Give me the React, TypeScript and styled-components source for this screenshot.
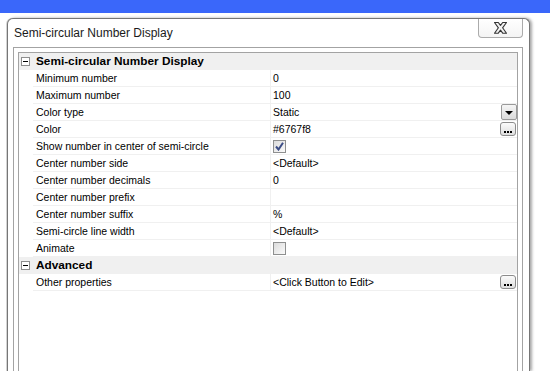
import React from 'react';
import styled, { createGlobalStyle } from 'styled-components';

const GlobalStyle = createGlobalStyle`
  html, body {
    margin: 0;
    padding: 0;
    background: #ffffff;
    font-family: "Liberation Sans", Arial, sans-serif;
    color: #000;
  }
`;

const Page = styled.div`
  width: 550px;
  height: 371px;
  overflow: hidden;
  display: flex;
  flex-direction: column;
  background: #fff;
`;

const TopBar = styled.div`
  height: 13px;
  flex-shrink: 0;
  background: #3a67fa;
`;

const Dialog = styled.div`
  margin: 5px 0 0 7px;
  width: 523px;
  box-sizing: border-box;
  flex: 1;
  display: flex;
  flex-direction: column;
  border: 1px solid #767676;
  border-bottom: none;
  border-radius: 6px 6px 0 0;
  background: #fff;
  box-shadow: 2px 0 3px rgba(0, 0, 0, 0.35), -1px 0 0 #d6d6d6;
`;

const TitleBar = styled.div`
  height: 28px;
  flex-shrink: 0;
  display: flex;
  align-items: flex-start;
`;

const Title = styled.div`
  padding: 7px 0 0 6px;
  font-size: 12px;
  line-height: 14px;
  color: #1a1a1a;
`;

const CloseButton = styled.div`
  margin-left: auto;
  margin-right: 6px;
  width: 45px;
  height: 19px;
  box-sizing: border-box;
  border: 1px solid #ababab;
  border-top: none;
  border-radius: 0 0 4px 4px;
  display: flex;
  align-items: center;
  justify-content: center;
  background: linear-gradient(#ffffff, #f4f4f4);
`;

const Panel = styled.div`
  flex: 1;
  margin: 0 6px 0 5px;
  padding: 4px 4px 0 4px;
  border: 1px solid #a3a3a3;
  border-bottom: none;
  display: flex;
  flex-direction: column;
`;

const Grid = styled.div`
  flex: 1;
  border: 1px solid #a3a3a3;
  border-bottom: none;
  background: #fff;
  font-size: 10.5px;
`;

const CategoryRow = styled.div`
  height: 16px;
  border-bottom: 1px solid #f0f0f0;
  background: #f0f0f0;
  display: flex;
  align-items: center;
`;

const Toggle = styled.div`
  width: 9px;
  height: 9px;
  box-sizing: border-box;
  margin: 0 6px 0 2px;
  border: 1px solid #8e8e8e;
  background: #fff;
  display: flex;
  align-items: center;
  justify-content: center;
  &::after {
    content: '';
    width: 5px;
    height: 1px;
    background: #000;
  }
`;

const CategoryName = styled.div`
  font-weight: bold;
  font-size: 11.8px;
  line-height: 16px;
`;

const Row = styled.div`
  display: grid;
  grid-template-columns: 14px 237px 1fr;
  height: 17px;
`;

const Cell = styled.div`
  border-bottom: 1px solid #f0f0f0;
  display: flex;
  align-items: center;
  line-height: 16px;
  white-space: nowrap;
`;

const Label = styled(Cell)`
  padding-left: 3px;
`;

const Value = styled(Cell)`
  border-left: 1px solid #f0f0f0;
  padding-left: 2px;
  justify-content: space-between;
`;

const DropButton = styled.div`
  width: 16px;
  height: 16px;
  margin-top: -1px;
  box-sizing: border-box;
  border: 1px solid #9a9a9a;
  border-radius: 2px;
  background: linear-gradient(#f6f6f6, #dadada);
  display: flex;
  align-items: center;
  justify-content: center;
  padding-top: 2px;
  &::after {
    content: '';
    border-left: 4px solid transparent;
    border-right: 4px solid transparent;
    border-top: 4px solid #000;
  }
`;

const EllipsisButton = styled.div`
  width: 16px;
  height: 14px;
  margin-right: 1px;
  box-sizing: border-box;
  border: 1px solid #8c8c8c;
  border-radius: 3px;
  background: linear-gradient(#fbfbfb, #dedede);
  display: flex;
  align-items: flex-end;
  justify-content: center;
  gap: 1px;
  padding-bottom: 2px;
`;

const Dot = styled.span`
  width: 2px;
  height: 2px;
  background: #000;
`;

const CheckBox = styled.div`
  width: 13px;
  height: 13px;
  box-sizing: border-box;
  border: 1px solid #8e8f8f;
  background: linear-gradient(135deg, #dcdcdc, #fafafa);
  display: flex;
  align-items: center;
  justify-content: center;
`;

type Prop = {
  name: string;
  value?: string;
  kind?: 'text' | 'drop' | 'ellipsis' | 'checked' | 'unchecked';
};

const mainProps: Prop[] = [
  { name: 'Minimum number', value: '0' },
  { name: 'Maximum number', value: '100' },
  { name: 'Color type', value: 'Static', kind: 'drop' },
  { name: 'Color', value: '#6767f8', kind: 'ellipsis' },
  { name: 'Show number in center of semi-circle', kind: 'checked' },
  { name: 'Center number side', value: '<Default>' },
  { name: 'Center number decimals', value: '0' },
  { name: 'Center number prefix', value: '' },
  { name: 'Center number suffix', value: '%' },
  { name: 'Semi-circle line width', value: '<Default>' },
  { name: 'Animate', kind: 'unchecked' },
];

const advancedProps: Prop[] = [
  { name: 'Other properties', value: '<Click Button to Edit>', kind: 'ellipsis' },
];

function CloseGlyph() {
  return (
    <svg width="13" height="12" viewBox="0 0 13 12">
      <polygon
        points="0.5,0.5 4.3,0.5 6.5,3.4 8.7,0.5 12.5,0.5 8.6,5.8 12.5,11.2 8.7,11.2 6.5,8.2 4.3,11.2 0.5,11.2 4.4,5.8"
        fill="#f2f2f2"
        stroke="#333"
        strokeWidth="1.1"
        strokeLinejoin="round"
      />
    </svg>
  );
}

function PropValue({ prop }: { prop: Prop }) {
  if (prop.kind === 'checked' || prop.kind === 'unchecked') {
    return (
      <Value>
        <CheckBox>
          {prop.kind === 'checked' && (
            <svg width="9" height="9" viewBox="0 0 9 9">
              <path d="M1 4.5 L3.5 7.5 L8 0.8" fill="none" stroke="#3c4d86" strokeWidth="2" />
            </svg>
          )}
        </CheckBox>
      </Value>
    );
  }
  return (
    <Value>
      <span>{prop.value}</span>
      {prop.kind === 'drop' && <DropButton />}
      {prop.kind === 'ellipsis' && (
        <EllipsisButton>
          <Dot />
          <Dot />
          <Dot />
        </EllipsisButton>
      )}
    </Value>
  );
}

function Category({ name, props }: { name: string; props: Prop[] }) {
  return (
    <>
      <CategoryRow>
        <Toggle />
        <CategoryName>{name}</CategoryName>
      </CategoryRow>
      {props.map((p) => (
        <Row key={p.name}>
          <div />
          <Label>{p.name}</Label>
          <PropValue prop={p} />
        </Row>
      ))}
    </>
  );
}

export default function App() {
  return (
    <Page>
      <GlobalStyle />
      <TopBar />
      <Dialog>
        <TitleBar>
          <Title>Semi-circular Number Display</Title>
          <CloseButton>
            <CloseGlyph />
          </CloseButton>
        </TitleBar>
        <Panel>
          <Grid>
            <Category name="Semi-circular Number Display" props={mainProps} />
            <Category name="Advanced" props={advancedProps} />
          </Grid>
        </Panel>
      </Dialog>
    </Page>
  );
}
